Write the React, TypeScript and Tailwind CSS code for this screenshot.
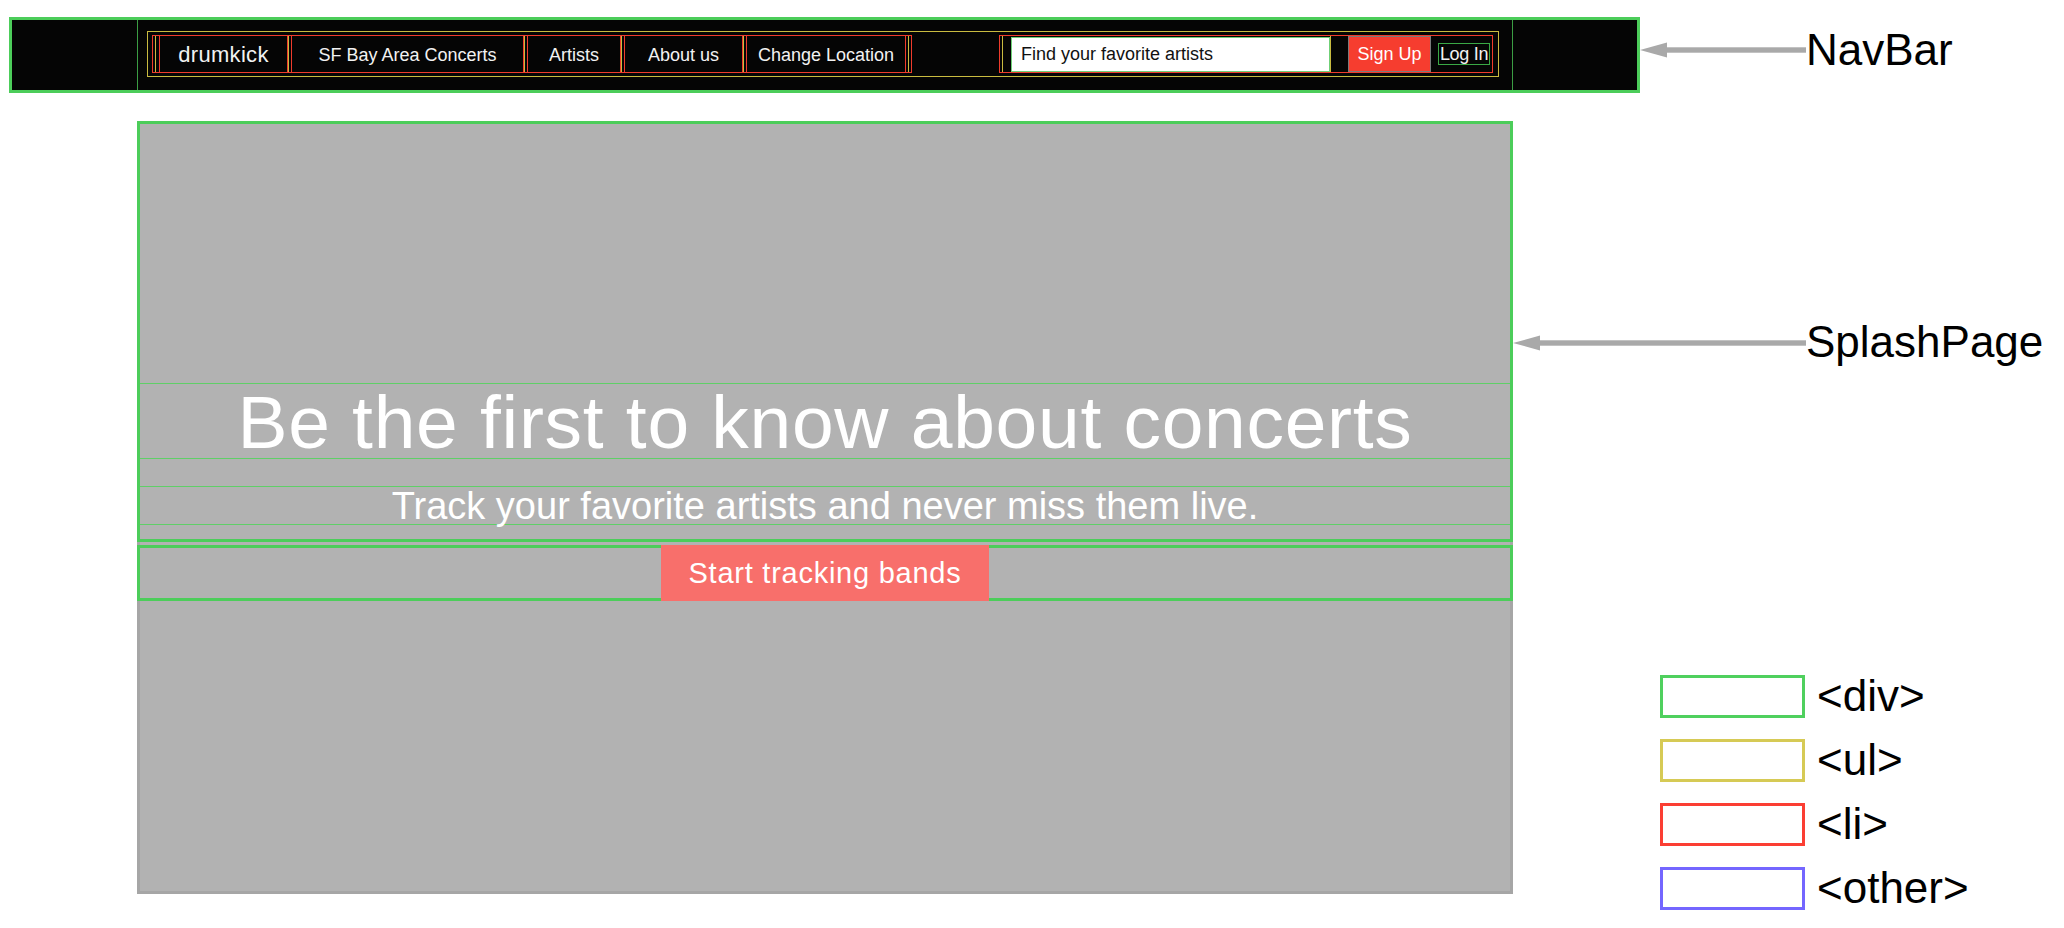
import React from "react";

const navItems = [
  { label: "drumkick", className: "w-[129px] text-[22px] tracking-[0.3px]" },
  { label: "SF Bay Area Concerts", className: "w-[233px] text-[18px]" },
  { label: "Artists", className: "w-[94px] text-[18px]" },
  { label: "About us", className: "w-[119px] text-[18px]" },
  { label: "Change Location", className: "w-[160px] text-[18px]" },
];

const legend = [
  { label: "<div>", border: "border-[#4fd05e]" },
  { label: "<ul>", border: "border-[#d6ca55]" },
  { label: "<li>", border: "border-[#fb3e33]" },
  { label: "<other>", border: "border-[#7466ff]" },
];

function Arrow({ width }: { width: number }) {
  return (
    <svg width={width} height={16} viewBox={`0 0 ${width} 16`} className="block shrink-0">
      <rect x={24} y={5.3} width={width - 24} height={5.4} fill="#a9a9a9" />
      <polygon points="0,8 27,0.5 27,15.5" fill="#a9a9a9" />
    </svg>
  );
}

function NavBar() {
  return (
    <nav className="h-[76px] w-[1631px] shrink-0 border-[3px] border-[#4ccd5a] bg-[#050505]">
      <div className="ml-[125px] h-full w-[1376px] border-x border-[#3b9d44] pl-[9px] pt-[11px]">
        <ul className="flex h-[46px] w-[1352px] items-center justify-between border border-[#c9bb40] pl-[4px] pr-[5px]">
          <li className="flex h-[38px] border border-[#ef3b2c] px-[2px]">
            <ul className="flex h-full border-x border-[#c9bb40] pl-[3px] pr-[2px]">
              {navItems.map((item, i) => (
                <React.Fragment key={item.label}>
                  {i > 0 ? <span className="mr-[2px] w-px bg-[#c9bb40]" /> : null}
                  <li
                    className={`flex h-full items-center justify-center whitespace-nowrap border-x border-[#ef3b2c] pt-[1px] leading-none text-[#f2f2f2] ${item.className}`}
                  >
                    {item.label}
                  </li>
                </React.Fragment>
              ))}
            </ul>
          </li>
          <li className="flex h-[38px] items-center border border-[#ef3b2c] pl-[2px] pr-[2px]">
            <ul className="flex h-full items-center border-x border-[#c9bb40] pl-[8px]">
              <input
                className="h-[35px] w-[319px] border border-[#6fd077] bg-white px-[9px] text-[18px] text-[#111] outline-none placeholder:text-[#111]"
                placeholder="Find your favorite artists"
              />
            </ul>
            <button className="ml-[17px] flex h-[36px] w-[83px] items-center justify-center whitespace-nowrap border border-[#7b7b7b] bg-[#f63d2f] text-[18px] leading-none text-white">
              Sign Up
            </button>
            <button className="ml-[7px] flex h-[22px] w-[52px] items-center justify-center overflow-visible whitespace-nowrap border border-[#3aa845] text-[18px] leading-none tracking-[-0.3px] text-[#f2f2f2]">
              Log In
            </button>
          </li>
        </ul>
      </div>
    </nav>
  );
}

function SplashPage() {
  return (
    <section className="h-[773px] w-[1376px] shrink-0 border-[3px] border-[#a6a6a6] bg-[#b2b2b2]">
      <div className="-mx-[3px] -mt-[3px] h-[421px] border-[3px] border-[#4ccd5a] pt-[259px]">
        <h1 className="border-y border-[#5fcf67] pt-[2px] text-center text-[75px] leading-[72px] font-normal tracking-[0.7px] text-white">
          Be the first to know about concerts
        </h1>
        <p className="mt-[27px] border-y border-[#5fcf67] pt-[1px] text-center text-[38px] leading-[36px] text-white">
          Track your favorite artists and never miss them live.
        </p>
      </div>
      <div className="-mx-[3px] mt-[3px] flex h-[56px] justify-center border-[3px] border-[#4ccd5a]">
        <button className="-my-[3px] flex h-[56px] w-[328px] items-center justify-center whitespace-nowrap bg-[#f86f6b] text-[29px] leading-none tracking-[0.75px] text-white">
          Start tracking bands
        </button>
      </div>
    </section>
  );
}

export default function App() {
  return (
    <div className="h-[928px] w-[2064px] overflow-hidden bg-white font-['Liberation_Sans',Arial,sans-serif] text-black">
      <div className="flex items-start pl-[9px] pt-[17px]">
        <NavBar />
        <div className="mt-[25px]">
          <Arrow width={166} />
        </div>
        <span className="mt-[11px] text-[44px] leading-[44px]">NavBar</span>
      </div>

      <div className="mt-[28px] flex items-start pl-[137px]">
        <SplashPage />
        <div className="flex flex-col">
          <div className="mt-[199px] flex items-start">
            <div className="mt-[15px]">
              <Arrow width={293} />
            </div>
            <span className="text-[44px] leading-[44px]">SplashPage</span>
          </div>
          <div className="ml-[147px] mt-[310px] flex flex-col gap-[20px]">
            {legend.map((item) => (
              <div key={item.label} className="flex h-[44px] items-center">
                <div className={`h-[43px] w-[145px] border-[3px] ${item.border}`} />
                <span className="ml-[12px] text-[44px] leading-[44px]">{item.label}</span>
              </div>
            ))}
          </div>
        </div>
      </div>
    </div>
  );
}
